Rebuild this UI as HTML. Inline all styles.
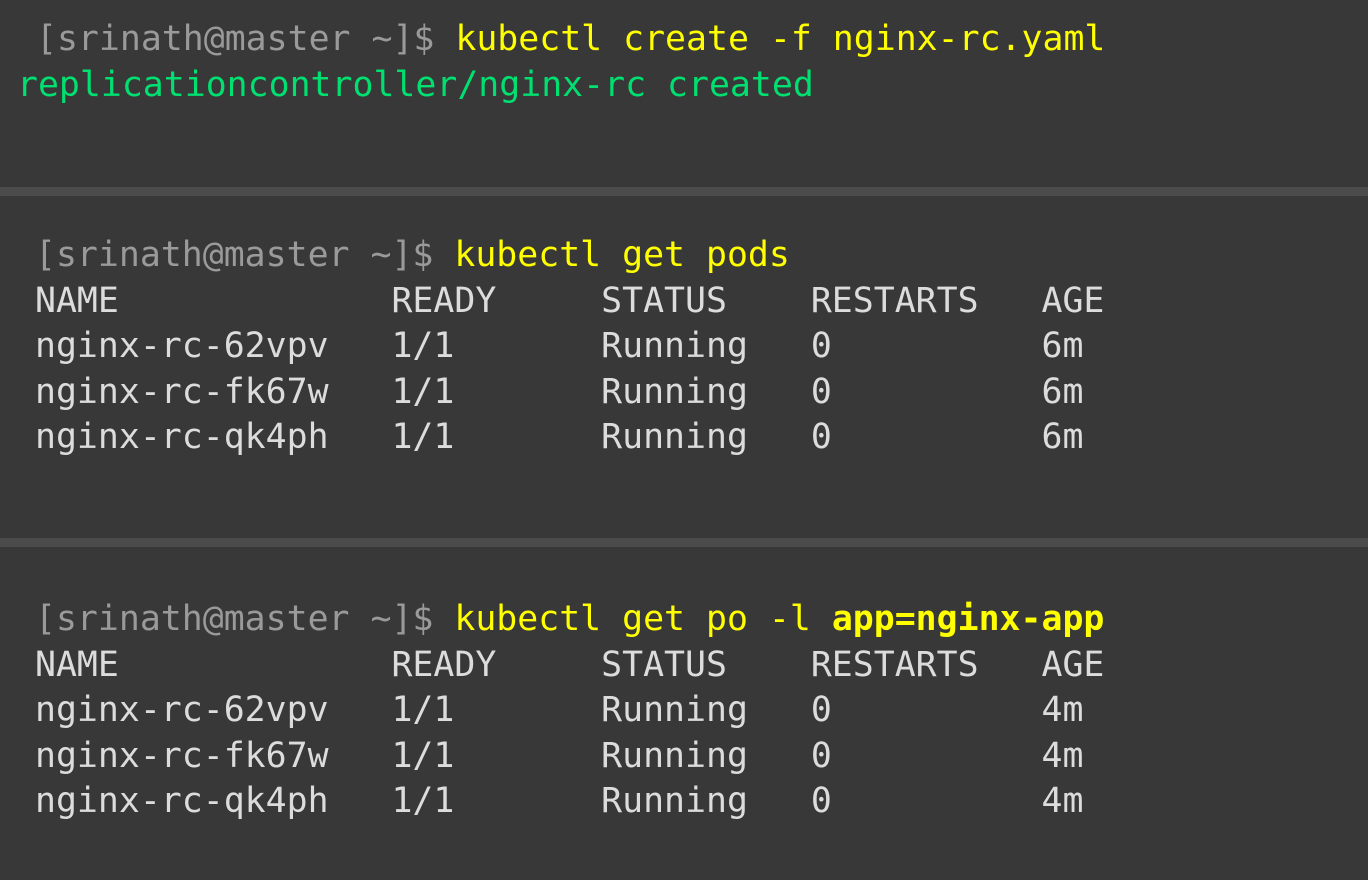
<!DOCTYPE html>
<html><head><meta charset="utf-8"><style>
html,body{margin:0;padding:0;width:1368px;height:880px;background:#383838;overflow:hidden}
.l{position:absolute;white-space:pre;font-family:"DejaVu Sans Mono","Liberation Mono",monospace;font-size:34.85px;line-height:45.5px;color:#dcdcdc}
.p{color:#9a9a9a}.y{color:#ffff00}.g{color:#00e070}.b{font-weight:bold}
.sep{position:absolute;left:0;width:1368px;height:9px;background:#4b4b4b}
</style></head><body>
<div class="l" style="left:36px;top:17px"><span class="p">[srinath@master ~]$</span> <span class="y">kubectl create -f nginx-rc.yaml</span></div>
<div class="l g" style="left:17px;top:63px">replicationcontroller/nginx-rc created</div>
<div class="sep" style="top:187px"></div>
<div class="l" style="left:35px;top:233px"><span class="p">[srinath@master ~]$</span> <span class="y">kubectl get pods</span>
NAME             READY     STATUS    RESTARTS   AGE
nginx-rc-62vpv   1/1       Running   0          6m
nginx-rc-fk67w   1/1       Running   0          6m
nginx-rc-qk4ph   1/1       Running   0          6m</div>
<div class="sep" style="top:538px"></div>
<div class="l" style="left:35px;top:597px"><span class="p">[srinath@master ~]$</span> <span class="y">kubectl get po -l <span class="b">app=nginx-app</span></span>
NAME             READY     STATUS    RESTARTS   AGE
nginx-rc-62vpv   1/1       Running   0          4m
nginx-rc-fk67w   1/1       Running   0          4m
nginx-rc-qk4ph   1/1       Running   0          4m</div>
</body></html>
